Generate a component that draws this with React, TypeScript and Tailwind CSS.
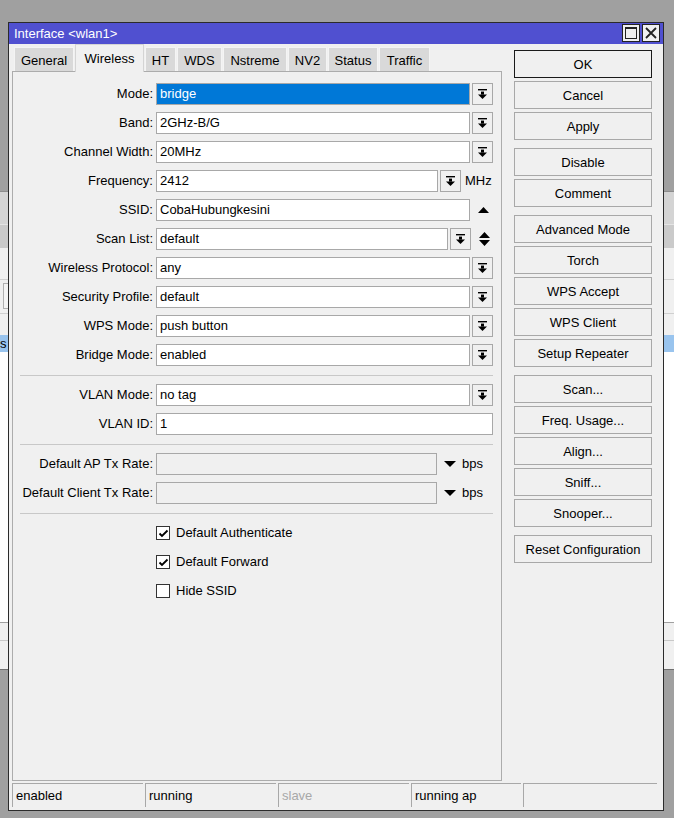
import React from 'react';

const Drop = ({ className = '' }: { className?: string }) => (
  <div className={`flex h-[22px] w-[21px] shrink-0 items-center justify-center border border-[#a8a8a8] bg-[#f0f0f0] ${className}`}>
    <svg width="9" height="10" viewBox="0 0 9 10">
      <rect x="0" y="0" width="9" height="1.4" fill="#000" />
      <rect x="3" y="2.6" width="3" height="3" fill="#000" />
      <path d="M0 5.4h9L4.5 10z" fill="#000" />
    </svg>
  </div>
);

const Label = ({ text }: { text: string }) => (
  <div className="w-[140px] shrink-0 text-right whitespace-nowrap">{text}</div>
);

const Input = ({ value, width, selected = false, disabled = false }: { value: string; width: number; selected?: boolean; disabled?: boolean }) => (
  <div
    className={`ml-[3px] flex h-[22px] shrink-0 items-center border border-[#a8a8a8] px-[3px] whitespace-nowrap ${
      selected ? 'bg-[#0078d7] text-white' : disabled ? 'bg-[#f0f0f0]' : 'bg-white'
    }`}
    style={{ width }}
  >
    {value}
  </div>
);

const Sep = () => (
  <div className="h-[4px] pt-[2px]">
    <div className="ml-[7px] h-px w-[473px] bg-[#c8c8c8]" />
  </div>
);

const Check = ({ label, checked }: { label: string; checked: boolean }) => (
  <div className="flex h-[22px] items-center">
    <div className="ml-[143px] flex h-[14px] w-[14px] items-center justify-center border border-[#333] bg-white">
      {checked && (
        <svg width="11" height="11" viewBox="0 0 11 11">
          <path d="M1.5 5.5L4 8l5.5-5.5" fill="none" stroke="#000" strokeWidth="1.8" />
        </svg>
      )}
    </div>
    <span className="ml-[6px]">{label}</span>
  </div>
);

const Btn = ({ text, main = false }: { text: string; main?: boolean }) => (
  <div
    className={`flex h-[28px] items-center justify-center border bg-[#f0f0f0] pt-px ${
      main ? 'border-[#1a1a1a]' : 'border-[#a8a8a8]'
    }`}
  >
    {text}
  </div>
);

const tabs = [
  { name: 'General', w: 60 },
  { name: 'Wireless', w: 69, active: true },
  { name: 'HT', w: 31 },
  { name: 'WDS', w: 45 },
  { name: 'Nstreme', w: 64 },
  { name: 'NV2', w: 39 },
  { name: 'Status', w: 50 },
  { name: 'Traffic', w: 51 },
];

const buttonGroups = [
  ['OK', 'Cancel', 'Apply'],
  ['Disable', 'Comment'],
  ['Advanced Mode', 'Torch', 'WPS Accept', 'WPS Client', 'Setup Repeater'],
  ['Scan...', 'Freq. Usage...', 'Align...', 'Sniff...', 'Snooper...'],
  ['Reset Configuration'],
];

const status = [
  { text: 'enabled', w: 131 },
  { text: 'running', w: 131 },
  { text: 'slave', w: 131, dim: true },
  { text: 'running ap', w: 110 },
  { text: '', w: 134 },
];

export default function App() {
  return (
    <div className="relative h-[818px] w-[674px] overflow-hidden bg-[#a0a0a0] font-['Liberation_Sans',Arial,sans-serif] text-[13px] text-black">
      {/* window behind */}
      <div className="flex h-full flex-col">
        <div className="h-[191px] bg-[#a0a0a0]" />
        <div className="h-[33px] border-t border-[#8c8c8c] bg-[#d4d4d4]" />
        <div className="h-[24px] border-t border-[#e4e4e4] bg-[#cacaca]" />
        <div className="h-[31px] bg-[#f0f0f0]" />
        <div className="h-[34px] border-t border-[#d0d0d0] bg-[#f0f0f0] pl-[3px] pt-[3px]">
          <div className="h-[26px] w-[20px] border border-[#b0b0b0] bg-[#f4f4f4]" />
        </div>
        <div className="h-[22px] border-t border-[#d0d0d0] bg-[#f0f0f0]" />
        <div className="flex h-[17px] items-center bg-[#99c4ee] leading-none">s</div>
        <div className="h-[270px] bg-white" />
        <div className="h-[18px] border-t border-[#a0a0a0] bg-[#f0f0f0]" />
        <div className="h-[30px] border-y border-t-[#c8c8c8] border-b-[#707070] bg-[#f0f0f0]" />
        <div className="flex-1 bg-[#a0a0a0]" />
      </div>

      {/* dialog window */}
      <div className="absolute left-[8px] top-[22px] flex h-[789px] w-[656px] flex-col border border-[#2b2b2b] bg-[#f0f0f0]">
        {/* title bar */}
        <div className="flex h-[21px] shrink-0 items-center bg-[#5050d0] pl-[5px] pr-[3px]">
          <span className="flex-1 text-white">Interface &lt;wlan1&gt;</span>
          <div className="flex gap-[2px] self-start pt-px">
            <div className="flex h-[18px] w-[18px] items-center justify-center border border-[#222] bg-[#f0f0f0]">
              <div className="h-[12px] w-[12px] border border-t-2 border-[#222]" />
            </div>
            <div className="flex h-[18px] w-[18px] items-center justify-center border border-[#222] bg-[#f0f0f0]">
              <svg width="12" height="12" viewBox="0 0 12 12">
                <path d="M1 1l10 10M11 1L1 11" stroke="#222" strokeWidth="1.8" />
              </svg>
            </div>
          </div>
        </div>

        <div className="flex min-h-0 flex-1 pl-[3px]">
          {/* tabs + panel */}
          <div className="flex w-[490px] flex-col">
            <div className="flex h-[27px] items-end gap-[1px] pl-[2px]">
              {tabs.map((t) =>
                t.active ? (
                  <div
                    key={t.name}
                    className="relative z-10 -mb-px flex h-[28px] items-center justify-center border border-b-0 border-[#d4d4d4] bg-[#f0f0f0]"
                    style={{ width: t.w }}
                  >
                    {t.name}
                  </div>
                ) : (
                  <div
                    key={t.name}
                    className="flex h-[24px] items-center justify-center border border-b-0 border-[#f4f4f4] bg-[#d9d9d9] pt-[3px]"
                    style={{ width: t.w }}
                  >
                    {t.name}
                  </div>
                )
              )}
            </div>

            <div className="flex flex-1 flex-col gap-[7px] border border-[#acacac] pt-[11px]">
              <div className="flex items-center">
                <Label text="Mode:" />
                <Input value="bridge" width={314} selected />
                <Drop className="ml-[2px]" />
              </div>
              <div className="flex items-center">
                <Label text="Band:" />
                <Input value="2GHz-B/G" width={314} />
                <Drop className="ml-[2px]" />
              </div>
              <div className="flex items-center">
                <Label text="Channel Width:" />
                <Input value="20MHz" width={314} />
                <Drop className="ml-[2px]" />
              </div>
              <div className="flex items-center">
                <Label text="Frequency:" />
                <Input value="2412" width={282} />
                <Drop className="ml-[2px]" />
                <span className="ml-[4px]">MHz</span>
              </div>
              <div className="flex items-center">
                <Label text="SSID:" />
                <Input value="CobaHubungkesini" width={314} />
                <svg className="ml-[8px]" width="11" height="6" viewBox="0 0 11 6">
                  <path d="M0 6h11L5.5 0z" fill="#000" />
                </svg>
              </div>
              <div className="flex items-center">
                <Label text="Scan List:" />
                <Input value="default" width={292} />
                <Drop className="ml-[2px]" />
                <svg className="ml-[8px]" width="11" height="14" viewBox="0 0 11 14">
                  <path d="M0 6h11L5.5 0z M0 8h11L5.5 14z" fill="#000" />
                </svg>
              </div>
              <div className="flex items-center">
                <Label text="Wireless Protocol:" />
                <Input value="any" width={314} />
                <Drop className="ml-[2px]" />
              </div>
              <div className="flex items-center">
                <Label text="Security Profile:" />
                <Input value="default" width={314} />
                <Drop className="ml-[2px]" />
              </div>
              <div className="flex items-center">
                <Label text="WPS Mode:" />
                <Input value="push button" width={314} />
                <Drop className="ml-[2px]" />
              </div>
              <div className="flex items-center">
                <Label text="Bridge Mode:" />
                <Input value="enabled" width={314} />
                <Drop className="ml-[2px]" />
              </div>

              <Sep />

              <div className="flex items-center">
                <Label text="VLAN Mode:" />
                <Input value="no tag" width={314} />
                <Drop className="ml-[2px]" />
              </div>
              <div className="flex items-center">
                <Label text="VLAN ID:" />
                <Input value="1" width={337} />
              </div>

              <Sep />

              <div className="flex items-center">
                <Label text="Default AP Tx Rate:" />
                <Input value="" width={281} disabled />
                <svg className="ml-[7px]" width="12" height="6" viewBox="0 0 12 6">
                  <path d="M0 0h12L6 6z" fill="#000" />
                </svg>
                <span className="ml-[6px]">bps</span>
              </div>
              <div className="flex items-center">
                <Label text="Default Client Tx Rate:" />
                <Input value="" width={281} disabled />
                <svg className="ml-[7px]" width="12" height="6" viewBox="0 0 12 6">
                  <path d="M0 0h12L6 6z" fill="#000" />
                </svg>
                <span className="ml-[6px]">bps</span>
              </div>

              <Sep />

              <Check label="Default Authenticate" checked />
              <Check label="Default Forward" checked />
              <Check label="Hide SSID" checked={false} />
            </div>
          </div>

          {/* right buttons */}
          <div className="ml-[12px] flex w-[138px] flex-col gap-[8px] pt-[6px]">
            {buttonGroups.map((g, i) => (
              <div key={i} className="flex flex-col gap-[3px]">
                {g.map((b) => (
                  <Btn key={b} text={b} main={b === 'OK'} />
                ))}
              </div>
            ))}
          </div>
        </div>

        {/* status bar */}
        <div className="mt-[2px] mb-[3px] flex h-[24px] shrink-0 gap-[2px] pl-[3px]">
          {status.map((s, i) => (
            <div
              key={i}
              className={`flex items-center border-t border-l border-[#a8a8a8] pl-[3px] ${s.dim ? 'text-[#a8a8a8]' : ''}`}
              style={{ width: s.w }}
            >
              {s.text}
            </div>
          ))}
        </div>
      </div>
    </div>
  );
}
